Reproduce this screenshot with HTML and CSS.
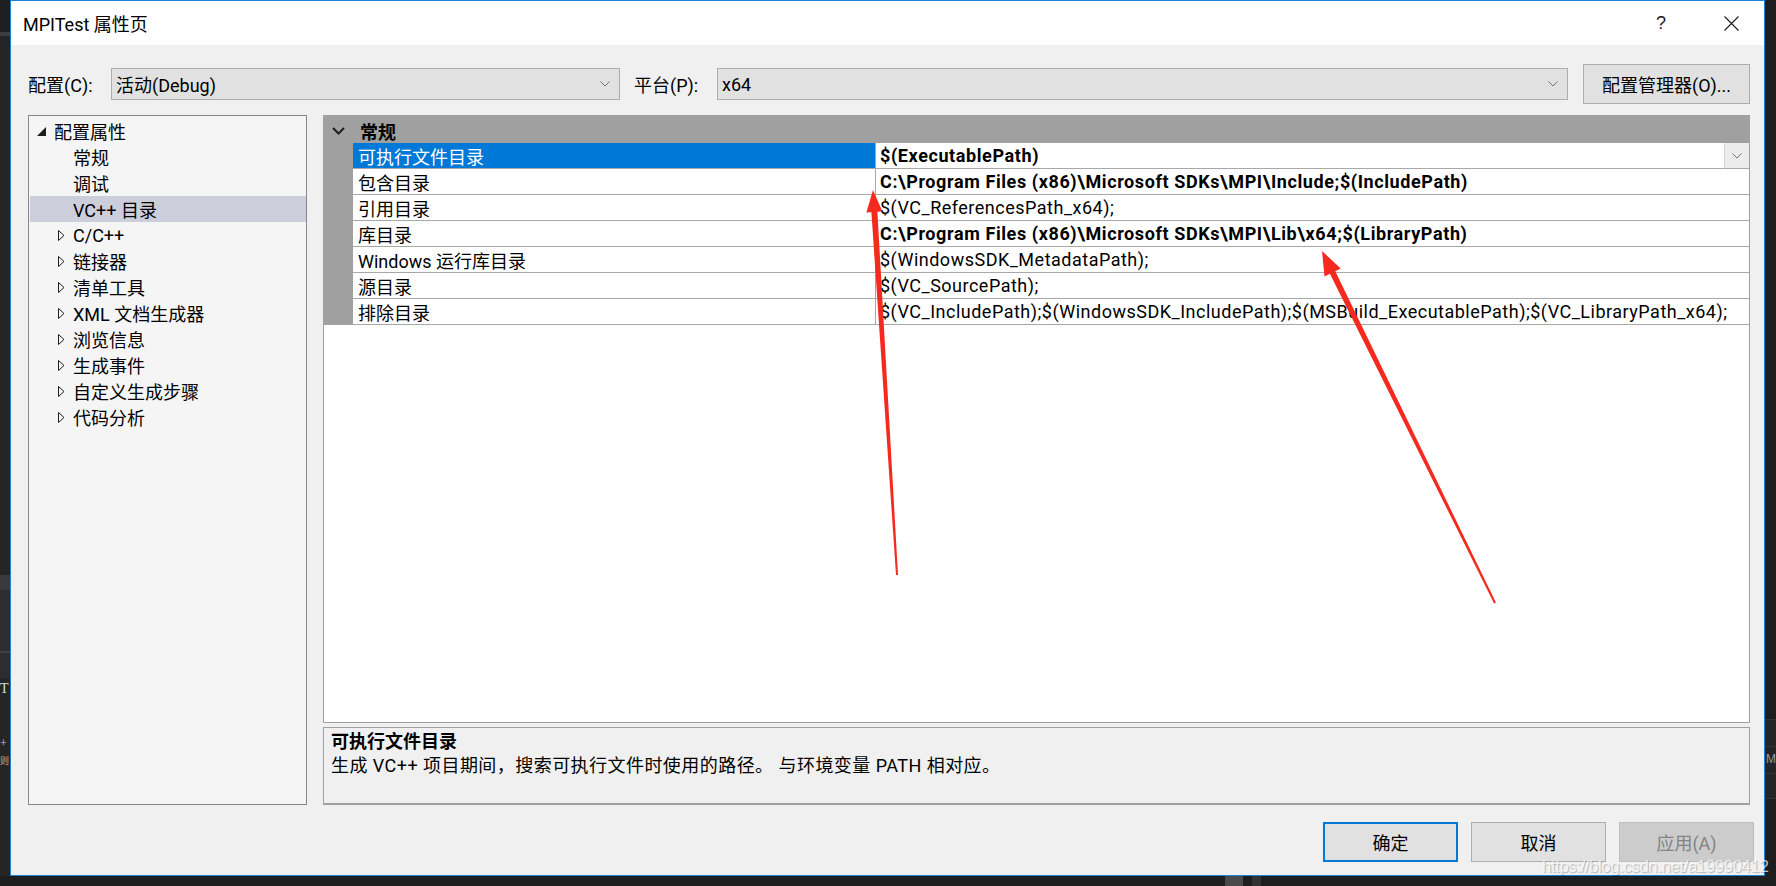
FILE: index.html
```html
<!DOCTYPE html>
<html lang="zh-CN">
<head>
<meta charset="utf-8">
<title>MPITest 属性页</title>
<link rel="stylesheet" href="styles.css">
</head>
<body>
<div class="screen">
  <div class="strip-left">
    <span class="frag frag-t">T</span>
    <span class="frag frag-plus">+</span>
    <span class="frag frag-ze">则</span>
  </div>
  <div class="dialog">
    <div class="titlebar">
      <span class="title">MPITest 属性页</span>
      <span class="help">?</span>
      <span class="close">
        <svg width="15" height="15" viewBox="0 0 15 15"><path d="M0.5 0.5 L14.5 14.5 M14.5 0.5 L0.5 14.5" stroke="#1a1a1a" stroke-width="1.1" fill="none"/></svg>
      </span>
    </div>
    <div class="body">
      <div class="config-row">
        <span class="lbl">配置(C):</span>
        <div class="combo combo-config">
          <span>活动(Debug)</span>
          <svg class="chev" width="10" height="6" viewBox="0 0 10 6"><path d="M0.5 0.5 L5 5 L9.5 0.5" fill="none" stroke="#707070" stroke-width="1"/></svg>
        </div>
        <span class="lbl lbl-platform">平台(P):</span>
        <div class="combo combo-platform">
          <span>x64</span>
          <svg class="chev" width="10" height="6" viewBox="0 0 10 6"><path d="M0.5 0.5 L5 5 L9.5 0.5" fill="none" stroke="#707070" stroke-width="1"/></svg>
        </div>
        <button class="btn btn-manager">配置管理器(O)...</button>
      </div>
      <div class="main">
        <div class="tree">
          <div class="node root">
            <svg class="exp" width="9" height="9" viewBox="0 0 9 9"><polygon points="9,0 9,9 0,9" fill="#1e1e1e"/></svg>
            <span>配置属性</span>
          </div>
          <div class="node leaf">常规</div>
          <div class="node leaf">调试</div>
          <div class="node leaf sel">VC++ 目录</div>
          <div class="node coll"><svg class="tri" width="7" height="11" viewBox="0 0 7 11"><polygon points="0.5,0.5 6,5.5 0.5,10.5" fill="none" stroke="#1e1e1e" stroke-width="1"/></svg><span>C/C++</span></div>
          <div class="node coll"><svg class="tri" width="7" height="11" viewBox="0 0 7 11"><polygon points="0.5,0.5 6,5.5 0.5,10.5" fill="none" stroke="#1e1e1e" stroke-width="1"/></svg><span>链接器</span></div>
          <div class="node coll"><svg class="tri" width="7" height="11" viewBox="0 0 7 11"><polygon points="0.5,0.5 6,5.5 0.5,10.5" fill="none" stroke="#1e1e1e" stroke-width="1"/></svg><span>清单工具</span></div>
          <div class="node coll"><svg class="tri" width="7" height="11" viewBox="0 0 7 11"><polygon points="0.5,0.5 6,5.5 0.5,10.5" fill="none" stroke="#1e1e1e" stroke-width="1"/></svg><span>XML 文档生成器</span></div>
          <div class="node coll"><svg class="tri" width="7" height="11" viewBox="0 0 7 11"><polygon points="0.5,0.5 6,5.5 0.5,10.5" fill="none" stroke="#1e1e1e" stroke-width="1"/></svg><span>浏览信息</span></div>
          <div class="node coll"><svg class="tri" width="7" height="11" viewBox="0 0 7 11"><polygon points="0.5,0.5 6,5.5 0.5,10.5" fill="none" stroke="#1e1e1e" stroke-width="1"/></svg><span>生成事件</span></div>
          <div class="node coll"><svg class="tri" width="7" height="11" viewBox="0 0 7 11"><polygon points="0.5,0.5 6,5.5 0.5,10.5" fill="none" stroke="#1e1e1e" stroke-width="1"/></svg><span>自定义生成步骤</span></div>
          <div class="node coll"><svg class="tri" width="7" height="11" viewBox="0 0 7 11"><polygon points="0.5,0.5 6,5.5 0.5,10.5" fill="none" stroke="#1e1e1e" stroke-width="1"/></svg><span>代码分析</span></div>
        </div>
        <div class="right">
          <div class="grid">
            <div class="grid-header">
              <svg class="hchev" width="13" height="8" viewBox="0 0 13 8"><path d="M1 1 L6.5 6.5 L12 1" fill="none" stroke="#1e1e1e" stroke-width="2"/></svg>
              <span class="cat">常规</span>
            </div>
            <div class="row selected">
              <div class="gutter"></div>
              <div class="name">可执行文件目录</div>
              <div class="value bold">$(ExecutablePath)</div>
              <div class="drop"><svg width="10" height="6" viewBox="0 0 10 6"><path d="M0.5 0.5 L5 5 L9.5 0.5" fill="none" stroke="#707070" stroke-width="1"/></svg></div>
            </div>
            <div class="row">
              <div class="gutter"></div>
              <div class="name">包含目录</div>
              <div class="value bold">C:\Program Files (x86)\Microsoft SDKs\MPI\Include;$(IncludePath)</div>
            </div>
            <div class="row">
              <div class="gutter"></div>
              <div class="name">引用目录</div>
              <div class="value">$(VC_ReferencesPath_x64);</div>
            </div>
            <div class="row">
              <div class="gutter"></div>
              <div class="name">库目录</div>
              <div class="value bold">C:\Program Files (x86)\Microsoft SDKs\MPI\Lib\x64;$(LibraryPath)</div>
            </div>
            <div class="row">
              <div class="gutter"></div>
              <div class="name">Windows 运行库目录</div>
              <div class="value">$(WindowsSDK_MetadataPath);</div>
            </div>
            <div class="row">
              <div class="gutter"></div>
              <div class="name">源目录</div>
              <div class="value">$(VC_SourcePath);</div>
            </div>
            <div class="row">
              <div class="gutter"></div>
              <div class="name">排除目录</div>
              <div class="value">$(VC_IncludePath);$(WindowsSDK_IncludePath);$(MSBuild_ExecutablePath);$(VC_LibraryPath_x64);</div>
            </div>
          </div>
          <div class="desc">
            <div class="desc-title">可执行文件目录</div>
            <div class="desc-text">生成 VC++ 项目期间，搜索可执行文件时使用的路径。 与环境变量 PATH 相对应。</div>
          </div>
        </div>
      </div>
      <div class="buttons">
        <button class="btn btn-ok">确定</button>
        <button class="btn">取消</button>
        <button class="btn btn-disabled">应用(A)</button>
      </div>
    </div>
  </div>
  <div class="strip-right">
    <span class="frag frag-m">M</span>
  </div>
</div>
<div class="strip-bottom"></div>
<svg class="arrows" width="1776" height="886" viewBox="0 0 1776 886">
  <polygon fill="#f52a1f" points="873,190 882.4,211.5 877.4,211.8 898,574.9 896,575.1 871.4,212.2 866.4,212.5"/>
  <polygon fill="#f52a1f" points="1322,251 1340.7,268.5 1335.3,271.2 1495.9,602.6 1494.1,603.4 1329.9,273.8 1324.5,276.5"/>
</svg>
<div class="watermark">https://blog.csdn.net/a19990412</div>
</body>
</html>
```
FILE: styles.css
```css
* { box-sizing: border-box; }
html, body { margin: 0; padding: 0; }
body {
  width: 1776px;
  height: 886px;
  overflow: hidden;
  position: relative;
  background: #1e1e1e;
  font-family: "Roboto", "Noto Sans CJK SC", sans-serif;
  font-size: 18px;
  color: #000;
}
.screen { display: flex; height: 876px; }

.strip-left {
  width: 10px;
  overflow: hidden;
  display: flex;
  flex-direction: column;
  background: linear-gradient(to bottom,
    #1f1f1f 0, #1f1f1f 32px, #3e3e42 32px, #3e3e42 36px,
    #252526 36px, #252526 575px, #3a3a3d 575px, #3a3a3d 590px,
    #2d2d30 590px, #2d2d30 651px, #3f3f46 651px, #3f3f46 653px,
    #2d2d30 653px, #2d2d30 678px, #252526 678px);
}
.frag { display: block; font-family: "Liberation Serif", serif; font-size: 14px; line-height: 14px; color: #dcdcdc; }
.frag-t { margin-top: 682px; }
.frag-plus { margin-top: 40px; color: #c8c8c8; font-size: 12px; }
.frag-ze { margin-top: 4px; color: #c9a97c; font-family: "Noto Sans CJK SC", sans-serif; font-size: 9px; line-height: 14px; }

.strip-right {
  flex: 1;
  overflow: hidden;
  display: flex;
  flex-direction: column;
  background: linear-gradient(to bottom,
    #1e1e1e 0, #1e1e1e 719px, #333337 719px, #333337 720px,
    #252526 720px, #252526 746px, #333337 746px, #333337 747px,
    #252526 747px, #252526 773px, #333337 773px, #333337 774px,
    #252526 774px, #252526 798px, #333337 798px, #333337 799px, #1e1e1e 799px);
}
.frag-m { margin-top: 752px; margin-left: 1px; color: #9a9a9a; font-family: "Liberation Sans", sans-serif; font-size: 12px; line-height: 14px; }

.strip-bottom {
  height: 10px;
  background: linear-gradient(to right,
    #1e1e1e 0, #1e1e1e 1225px, #4a4a4a 1225px, #4a4a4a 1243px,
    #1e1e1e 1243px, #1e1e1e 1252px, #333333 1252px, #333333 1261px, #1e1e1e 1261px);
}

.dialog {
  width: 1755px;
  height: 876px;
  border: 1px solid #1883d7;
  background: #f0f0f0;
  display: flex;
  flex-direction: column;
}
.titlebar {
  height: 44px;
  flex: none;
  background: #fff;
  display: flex;
  align-items: center;
  padding: 0 10px 0 12px;
}
.title { flex: 1; }
.help { width: 46px; text-align: center; font-family: "Liberation Sans", sans-serif; color: #1a1a1a; }
.close { width: 46px; margin-left: 24px; display: flex; justify-content: center; }

.body {
  flex: 1;
  display: flex;
  flex-direction: column;
  padding: 19px 14px 13px 17px;
}
.config-row { height: 40px; display: flex; align-items: center; }
.lbl { width: 83px; flex: none; }
.lbl-platform { margin-left: 14px; }
.combo {
  height: 32px;
  flex: none;
  background: #e1e1e1;
  border: 1px solid #adadad;
  display: flex;
  align-items: center;
  justify-content: space-between;
  padding: 0 9px 0 4px;
}
.combo-config { width: 509px; }
.combo-platform { width: 851px; }

.btn {
  font-family: inherit;
  font-size: 18px;
  color: #000;
  background: #e1e1e1;
  border: 1px solid #adadad;
  padding: 0;
  margin: 0;
  width: 135px;
  height: 40px;
}
.btn-manager { width: 167px; margin-left: 15px; }
.btn-ok { border: 2px solid #0078d7; }
.btn-disabled { background: #cccccc; border-color: #bfbfbf; color: #838383; }

.main { margin-top: 11px; height: 690px; display: flex; gap: 16px; }
.tree {
  width: 279px;
  flex: none;
  border: 1px solid #828790;
  background: #f5f5f5;
  padding: 2px 0 0 1px;
}
.node { height: 26px; display: flex; align-items: center; white-space: nowrap; }
.root .exp { margin-left: 7px; margin-right: 8px; }
.leaf { padding-left: 43px; }
.coll .tri { margin-left: 28px; margin-right: 8px; }
.sel { background: #cccedb; }

.right { flex: 1; display: flex; flex-direction: column; gap: 4px; }
.grid {
  height: 608px;
  border: 1px solid #a0a0a0;
  background: #fff;
}
.grid-header {
  height: 27px;
  background: #a0a0a0;
  display: flex;
  align-items: center;
  padding-top: 2px;
}
.hchev { margin-left: 8px; margin-right: 15px; }
.cat { font-weight: 700; }
.row {
  height: 26px;
  display: flex;
  white-space: nowrap;
}
.gutter { width: 29px; flex: none; background: #a0a0a0; }
.name {
  width: 523px;
  flex: none;
  padding-left: 5px;
  border-right: 1px solid #a8a8a8;
  border-bottom: 1px solid #a8a8a8;
  display: flex;
  align-items: center;
}
.value {
  flex: 1;
  padding-left: 4px;
  border-bottom: 1px solid #a8a8a8;
  display: flex;
  align-items: center;
  overflow: hidden;
  letter-spacing: 0.5px;
}
.bold { font-weight: 700; letter-spacing: 0.6px; }
.selected .name { background: #0078d7; color: #fff; }
.drop {
  width: 25px;
  flex: none;
  background: #ececec;
  border-left: 1px solid #d4d4d4;
  border-bottom: 1px solid #a8a8a8;
  display: flex;
  align-items: center;
  justify-content: center;
}

.desc {
  height: 78px;
  border: 1px solid #a0a0a0;
  border-bottom-width: 2px;
  background: #f0f0f0;
  padding: 2px 0 0 7px;
  line-height: 24px;
}
.desc-title { font-weight: 700; }
.desc-text { letter-spacing: 0.45px; }

.buttons {
  margin-top: 17px;
  height: 40px;
  display: flex;
  justify-content: flex-end;
  gap: 13px;
  margin-right: -4px;
}

.arrows { position: absolute; left: 0; top: 0; pointer-events: none; }
.watermark {
  position: absolute;
  left: 1542px;
  top: 857px;
  font-family: "Liberation Sans", sans-serif;
  font-size: 17px;
  letter-spacing: -0.5px;
  color: rgba(255, 255, 255, 0.72);
  text-shadow: 1px 1px 1px rgba(0, 0, 0, 0.25);
  white-space: nowrap;
}
```
